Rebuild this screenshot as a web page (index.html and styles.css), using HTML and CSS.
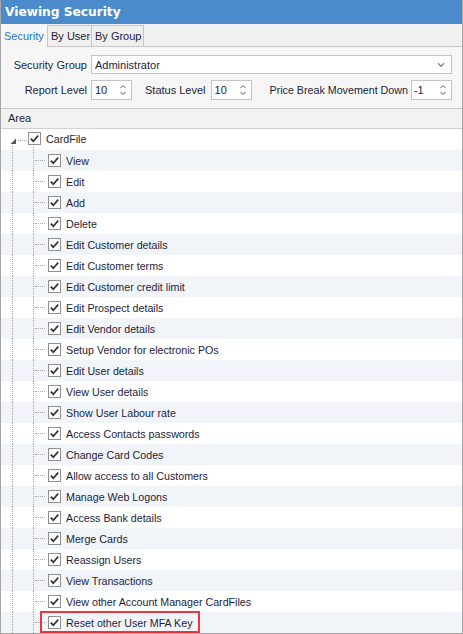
FILE: index.html
```html
<!DOCTYPE html>
<html>
<head>
<meta charset="utf-8">
<link rel="stylesheet" href="styles.css">
</head>
<body>
<div class="win">
  <div class="title">Viewing Security</div>
  <div class="tabs">
    <div class="tab active">Security</div>
    <div class="tab first">By User</div>
    <div class="tab third">By Group</div>
    <div class="tabfill"></div>
  </div>
  <div class="panel">
    <div class="frow r1">
      <span class="lbl l1">Security Group</span>
      <div class="combo"><span>Administrator</span>
        <svg class="chev" width="8" height="6" viewBox="0 0 8 6"><path d="M1 1.2 L4 4.2 L7 1.2" fill="none" stroke="#8a8a8a" stroke-width="1.4"/></svg>
      </div>
    </div>
    <div class="frow r2">
      <span class="lbl l1">Report Level</span>
      <div class="spin"><span>10</span>
        <svg class="sp" width="8" height="14" viewBox="0 0 8 14"><path d="M1.5 5 L4 2.5 L6.5 5 M1.5 9 L4 11.5 L6.5 9" fill="none" stroke="#9a9a9a" stroke-width="1.2"/></svg>
      </div>
      <span class="lbl l2">Status Level</span>
      <div class="spin"><span>10</span>
        <svg class="sp" width="8" height="14" viewBox="0 0 8 14"><path d="M1.5 5 L4 2.5 L6.5 5 M1.5 9 L4 11.5 L6.5 9" fill="none" stroke="#9a9a9a" stroke-width="1.2"/></svg>
      </div>
      <span class="lbl l3">Price Break Movement Down</span>
      <div class="spin s3"><span>-1</span>
        <svg class="sp" width="8" height="14" viewBox="0 0 8 14"><path d="M1.5 5 L4 2.5 L6.5 5 M1.5 9 L4 11.5 L6.5 9" fill="none" stroke="#9a9a9a" stroke-width="1.2"/></svg>
      </div>
    </div>
  </div>
  <div class="grid">
    <div class="ghead">Area</div>
    <div class="rows">
      <div class="row root">
        <svg class="rootguide" width="27" height="21" viewBox="0 0 27 21"><path d="M15 9.5 L15 15 L9.5 15 Z" fill="#555"/><path d="M17 11.5 H26" stroke="#a8a8a8" stroke-width="1" stroke-dasharray="1 1"/><path d="M11.5 17 V21" stroke="#a8a8a8" stroke-width="1" stroke-dasharray="1 1"/></svg>
        <div class="cbcol"><span class="cb"><svg width="11" height="11" viewBox="0 0 11 11"><path d="M1.8 5.6 L4.3 8.2 L9.2 2.6" fill="none" stroke="#333" stroke-width="1.7"/></svg></span><span class="down"></span></div>
        <span class="txt rt">CardFile</span>
      </div>
      <div class="row alt"><span class="g1"></span><span class="g2"><span class="h"></span></span><span class="cb"><svg width="11" height="11" viewBox="0 0 11 11"><path d="M1.8 5.6 L4.3 8.2 L9.2 2.6" fill="none" stroke="#333" stroke-width="1.7"/></svg></span><span class="txt">View</span></div>
      <div class="row"><span class="g1"></span><span class="g2"><span class="h"></span></span><span class="cb"><svg width="11" height="11" viewBox="0 0 11 11"><path d="M1.8 5.6 L4.3 8.2 L9.2 2.6" fill="none" stroke="#333" stroke-width="1.7"/></svg></span><span class="txt">Edit</span></div>
      <div class="row alt"><span class="g1"></span><span class="g2"><span class="h"></span></span><span class="cb"><svg width="11" height="11" viewBox="0 0 11 11"><path d="M1.8 5.6 L4.3 8.2 L9.2 2.6" fill="none" stroke="#333" stroke-width="1.7"/></svg></span><span class="txt">Add</span></div>
      <div class="row"><span class="g1"></span><span class="g2"><span class="h"></span></span><span class="cb"><svg width="11" height="11" viewBox="0 0 11 11"><path d="M1.8 5.6 L4.3 8.2 L9.2 2.6" fill="none" stroke="#333" stroke-width="1.7"/></svg></span><span class="txt">Delete</span></div>
      <div class="row alt"><span class="g1"></span><span class="g2"><span class="h"></span></span><span class="cb"><svg width="11" height="11" viewBox="0 0 11 11"><path d="M1.8 5.6 L4.3 8.2 L9.2 2.6" fill="none" stroke="#333" stroke-width="1.7"/></svg></span><span class="txt">Edit Customer details</span></div>
      <div class="row"><span class="g1"></span><span class="g2"><span class="h"></span></span><span class="cb"><svg width="11" height="11" viewBox="0 0 11 11"><path d="M1.8 5.6 L4.3 8.2 L9.2 2.6" fill="none" stroke="#333" stroke-width="1.7"/></svg></span><span class="txt">Edit Customer terms</span></div>
      <div class="row alt"><span class="g1"></span><span class="g2"><span class="h"></span></span><span class="cb"><svg width="11" height="11" viewBox="0 0 11 11"><path d="M1.8 5.6 L4.3 8.2 L9.2 2.6" fill="none" stroke="#333" stroke-width="1.7"/></svg></span><span class="txt">Edit Customer credit limit</span></div>
      <div class="row"><span class="g1"></span><span class="g2"><span class="h"></span></span><span class="cb"><svg width="11" height="11" viewBox="0 0 11 11"><path d="M1.8 5.6 L4.3 8.2 L9.2 2.6" fill="none" stroke="#333" stroke-width="1.7"/></svg></span><span class="txt">Edit Prospect details</span></div>
      <div class="row alt"><span class="g1"></span><span class="g2"><span class="h"></span></span><span class="cb"><svg width="11" height="11" viewBox="0 0 11 11"><path d="M1.8 5.6 L4.3 8.2 L9.2 2.6" fill="none" stroke="#333" stroke-width="1.7"/></svg></span><span class="txt">Edit Vendor details</span></div>
      <div class="row"><span class="g1"></span><span class="g2"><span class="h"></span></span><span class="cb"><svg width="11" height="11" viewBox="0 0 11 11"><path d="M1.8 5.6 L4.3 8.2 L9.2 2.6" fill="none" stroke="#333" stroke-width="1.7"/></svg></span><span class="txt">Setup Vendor for electronic POs</span></div>
      <div class="row alt"><span class="g1"></span><span class="g2"><span class="h"></span></span><span class="cb"><svg width="11" height="11" viewBox="0 0 11 11"><path d="M1.8 5.6 L4.3 8.2 L9.2 2.6" fill="none" stroke="#333" stroke-width="1.7"/></svg></span><span class="txt">Edit User details</span></div>
      <div class="row"><span class="g1"></span><span class="g2"><span class="h"></span></span><span class="cb"><svg width="11" height="11" viewBox="0 0 11 11"><path d="M1.8 5.6 L4.3 8.2 L9.2 2.6" fill="none" stroke="#333" stroke-width="1.7"/></svg></span><span class="txt">View User details</span></div>
      <div class="row alt"><span class="g1"></span><span class="g2"><span class="h"></span></span><span class="cb"><svg width="11" height="11" viewBox="0 0 11 11"><path d="M1.8 5.6 L4.3 8.2 L9.2 2.6" fill="none" stroke="#333" stroke-width="1.7"/></svg></span><span class="txt">Show User Labour rate</span></div>
      <div class="row"><span class="g1"></span><span class="g2"><span class="h"></span></span><span class="cb"><svg width="11" height="11" viewBox="0 0 11 11"><path d="M1.8 5.6 L4.3 8.2 L9.2 2.6" fill="none" stroke="#333" stroke-width="1.7"/></svg></span><span class="txt">Access Contacts passwords</span></div>
      <div class="row alt"><span class="g1"></span><span class="g2"><span class="h"></span></span><span class="cb"><svg width="11" height="11" viewBox="0 0 11 11"><path d="M1.8 5.6 L4.3 8.2 L9.2 2.6" fill="none" stroke="#333" stroke-width="1.7"/></svg></span><span class="txt">Change Card Codes</span></div>
      <div class="row"><span class="g1"></span><span class="g2"><span class="h"></span></span><span class="cb"><svg width="11" height="11" viewBox="0 0 11 11"><path d="M1.8 5.6 L4.3 8.2 L9.2 2.6" fill="none" stroke="#333" stroke-width="1.7"/></svg></span><span class="txt">Allow access to all Customers</span></div>
      <div class="row alt"><span class="g1"></span><span class="g2"><span class="h"></span></span><span class="cb"><svg width="11" height="11" viewBox="0 0 11 11"><path d="M1.8 5.6 L4.3 8.2 L9.2 2.6" fill="none" stroke="#333" stroke-width="1.7"/></svg></span><span class="txt">Manage Web Logons</span></div>
      <div class="row"><span class="g1"></span><span class="g2"><span class="h"></span></span><span class="cb"><svg width="11" height="11" viewBox="0 0 11 11"><path d="M1.8 5.6 L4.3 8.2 L9.2 2.6" fill="none" stroke="#333" stroke-width="1.7"/></svg></span><span class="txt">Access Bank details</span></div>
      <div class="row alt"><span class="g1"></span><span class="g2"><span class="h"></span></span><span class="cb"><svg width="11" height="11" viewBox="0 0 11 11"><path d="M1.8 5.6 L4.3 8.2 L9.2 2.6" fill="none" stroke="#333" stroke-width="1.7"/></svg></span><span class="txt">Merge Cards</span></div>
      <div class="row"><span class="g1"></span><span class="g2"><span class="h"></span></span><span class="cb"><svg width="11" height="11" viewBox="0 0 11 11"><path d="M1.8 5.6 L4.3 8.2 L9.2 2.6" fill="none" stroke="#333" stroke-width="1.7"/></svg></span><span class="txt">Reassign Users</span></div>
      <div class="row alt"><span class="g1"></span><span class="g2"><span class="h"></span></span><span class="cb"><svg width="11" height="11" viewBox="0 0 11 11"><path d="M1.8 5.6 L4.3 8.2 L9.2 2.6" fill="none" stroke="#333" stroke-width="1.7"/></svg></span><span class="txt">View Transactions</span></div>
      <div class="row"><span class="g1"></span><span class="g2"><span class="h"></span></span><span class="cb"><svg width="11" height="11" viewBox="0 0 11 11"><path d="M1.8 5.6 L4.3 8.2 L9.2 2.6" fill="none" stroke="#333" stroke-width="1.7"/></svg></span><span class="txt">View other Account Manager CardFiles</span></div>
      <div class="row alt last"><span class="g1"></span><span class="g2"><span class="h"></span></span><span class="cb"><svg width="11" height="11" viewBox="0 0 11 11"><path d="M1.8 5.6 L4.3 8.2 L9.2 2.6" fill="none" stroke="#333" stroke-width="1.7"/></svg></span><span class="txt">Reset other User MFA Key</span><span class="hl"></span></div>
    </div>
  </div>
</div>
</body>
</html>
```

FILE: styles.css
```css
* { box-sizing: border-box; }
html, body { margin: 0; padding: 0; background: #ffffff; }
body {
  font-family: "Liberation Sans", Arial, sans-serif;
  font-size: 11px;
  color: #1d1d3a;
}
.win {
  width: 463px;
  height: 634px;
  border-left: 1px solid #a6a6a6;
  border-right: 1px solid #a6a6a6;
  border-bottom: 1px solid #a6a6a6;
  display: flex;
  flex-direction: column;
  overflow: hidden;
  background: #ffffff;
}
.title {
  height: 24px;
  flex: none;
  background: #4b8bcb;
  color: #ffffff;
  font-family: "DejaVu Sans", Verdana, sans-serif;
  font-weight: bold;
  font-size: 12.2px;
  line-height: 24px;
  padding-left: 5px;
  margin-left: -1px;
  margin-right: -1px;
}
.tabs {
  height: 23px;
  flex: none;
  display: flex;
  align-items: flex-end;
  background: #f0f0f0;
}
.tab {
  height: 22px;
  flex: none;
  white-space: nowrap;
  overflow: hidden;
  border-top: 1px solid #c6c6c6;
  border-right: 1px solid #c6c6c6;
  border-bottom: 1px solid #c8c8c8;
  background: #efefef;
  line-height: 20px;
  font-size: 11px;
  padding-left: 3px;
  color: #1d1d3a;
}
.tab.first { border-left: 1px solid #c6c6c6; width: 45px; }
.tab.third { width: 52px; padding-left: 3px; }
.tab.active {
  height: 23px;
  width: 46px;
  border: none;
  background: #f6f6f6;
  color: #1e73c8;
  padding-left: 3px;
  line-height: 25px;
}
.tabfill { flex: 1; height: 1px; background: #c8c8c8; }
.panel {
  flex: none;
  height: 61px;
  background: #f6f6f6;
  padding-top: 8px;
  display: flex;
  flex-direction: column;
  gap: 6px;
}
.frow { display: flex; align-items: center; }
.lbl { font-size: 11px; white-space: nowrap; flex: none; }
.l1 { width: 86px; text-align: right; margin-right: 4px; }
.l2 { margin-left: 13px; margin-right: 5px; }
.l3 { margin-left: 18px; margin-right: 3px; font-size: 10.7px; }
.combo {
  width: 361px;
  height: 19px;
  flex: none;
  background: #ffffff;
  border: 1px solid #c4c4c4;
  display: flex;
  align-items: center;
  justify-content: space-between;
  padding-left: 3px;
  padding-right: 6px;
  font-size: 11px;
}
.spin {
  width: 41px;
  height: 20px;
  flex: none;
  background: #ffffff;
  border: 1px solid #c4c4c4;
  display: flex;
  align-items: center;
  justify-content: space-between;
  padding-left: 3px;
  padding-right: 4px;
  font-size: 11px;
}
.s3 { padding-left: 2px; }
.grid { flex: 1; display: flex; flex-direction: column; }
.ghead {
  height: 21px;
  flex: none;
  border-top: 1px solid #c8c8c8;
  border-bottom: 1px solid #d2d2d2;
  background: #f2f2f2;
  padding-left: 7px;
  line-height: 19px;
  font-size: 11px;
}
.rows { flex: 1; display: flex; flex-direction: column; }
.row {
  height: 21px;
  flex: none;
  display: flex;
  align-items: center;
  background: #ffffff;
  position: relative;
}
.row.alt { background: #f1f5fa; }
.row.root { align-items: flex-start; }
.rootguide { flex: none; display: block; }
.cbcol {
  height: 21px;
  display: flex;
  flex-direction: column;
  padding-top: 3px;
}
.down {
  flex: 1;
  margin-left: 5px;
  margin-top: 2px;
  border-left: 1px dotted #a8a8a8;
}
.cb {
  width: 13px;
  height: 13px;
  flex: none;
  border: 1px solid #8f8f8f;
  background: #ffffff;
  display: flex;
  align-items: center;
  justify-content: center;
}
.cb svg { display: block; }
.txt { margin-left: 5px; font-size: 10.7px; white-space: nowrap; }
.txt.rt { line-height: 21px; }
.g1 {
  margin-left: 11px;
  width: 21px;
  height: 21px;
  border-left: 1px dotted #a8a8a8;
  flex: none;
}
.g2 {
  width: 15px;
  height: 21px;
  border-left: 1px dotted #a8a8a8;
  flex: none;
  display: flex;
  align-items: center;
  padding-left: 1px;
}
.g2 .h { width: 10px; height: 0; border-top: 1px dotted #a8a8a8; }
.hl {
  position: absolute;
  left: 39px;
  top: -1px;
  width: 160px;
  height: 22px;
  border: 2px solid #e8383d;
}
```
